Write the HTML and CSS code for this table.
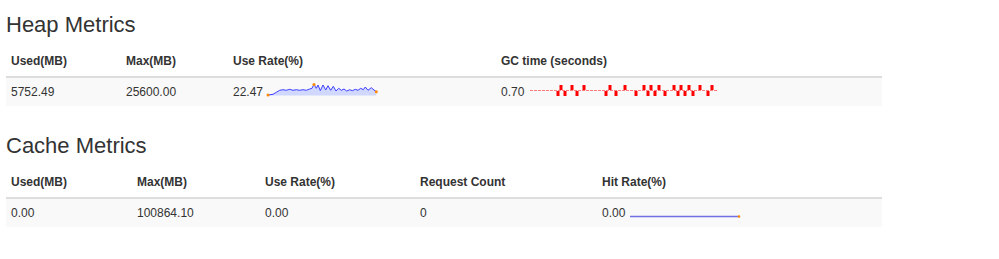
FILE: index.html
```html
<!DOCTYPE html>
<html>
<head>
<meta charset="utf-8">
<link rel="stylesheet" href="styles.css">
</head>
<body>
<div class="page">
  <section class="metrics">
    <h3 class="title">Heap Metrics</h3>
    <table class="table">
      <colgroup>
        <col class="w115"><col class="w107"><col class="w268"><col>
      </colgroup>
      <thead>
        <tr><th>Used(MB)</th><th>Max(MB)</th><th>Use Rate(%)</th><th>GC time (seconds)</th></tr>
      </thead>
      <tbody>
        <tr>
          <td>5752.49</td>
          <td>25600.00</td>
          <td>22.47 <svg class="spark use-rate" width="112" height="14" viewBox="0 0 112 14">
            <polygon class="fill" points="2,12 7,11.3 10.3,9.3 13.7,7.3 17,6.7 20.3,7.3 23.7,6.3 27,7.3 30.3,6.7 33.7,7.3 37,6.7 40.3,7.3 43.7,6 46,5.3 48,1.3 50.3,5.3 52,2 54.3,7.7 57,2 59.7,7 62,2.7 64.7,7.3 67.3,3.3 70,8 72.7,5.3 75.3,7.3 78,6 80.7,8 83.7,6.7 86.3,7.7 89.3,6.3 92,7.3 94.7,5.3 97.3,6.7 99.3,4 102,7.3 105.3,4.7 108,7 110.3,8.7 110.3,12.5 2,12.5"/>
            <polyline class="line" points="2,12 7,11.3 10.3,9.3 13.7,7.3 17,6.7 20.3,7.3 23.7,6.3 27,7.3 30.3,6.7 33.7,7.3 37,6.7 40.3,7.3 43.7,6 46,5.3 48,1.3 50.3,5.3 52,2 54.3,7.7 57,2 59.7,7 62,2.7 64.7,7.3 67.3,3.3 70,8 72.7,5.3 75.3,7.3 78,6 80.7,8 83.7,6.7 86.3,7.7 89.3,6.3 92,7.3 94.7,5.3 97.3,6.7 99.3,4 102,7.3 105.3,4.7 108,7 110.3,8.7"/>
            <circle class="spot" cx="2" cy="12" r="1.5"/>
            <circle class="spot" cx="48" cy="1.5" r="1.5"/>
            <circle class="spot" cx="110.3" cy="8.7" r="1.5"/>
          </svg></td>
          <td>0.70 <svg class="spark gc" width="192" height="14" viewBox="0 0 192 14">
            <line class="zero" x1="2" y1="7.5" x2="190" y2="7.5"/>
            <g class="up">
              <rect x="31.5" y="2" width="3" height="5"/>
              <rect x="42.5" y="2" width="3" height="5"/>
              <rect x="54.5" y="2" width="3" height="5"/>
              <rect x="80.5" y="2" width="3" height="5"/>
              <rect x="95.5" y="2" width="3" height="5"/>
              <rect x="114.5" y="2" width="3" height="5"/>
              <rect x="121.5" y="2" width="3" height="5"/>
              <rect x="129.5" y="2" width="3" height="5"/>
              <rect x="144.5" y="2" width="3" height="5"/>
              <rect x="151.5" y="2" width="3" height="5"/>
              <rect x="159.5" y="2" width="3" height="5"/>
              <rect x="170.5" y="2" width="3" height="5"/>
              <rect x="182.5" y="2" width="3" height="5"/>
            </g>
            <g class="down">
              <rect x="28.5" y="8" width="3" height="5"/>
              <rect x="35.5" y="8" width="3" height="5"/>
              <rect x="47.5" y="8" width="3" height="5"/>
              <rect x="76.5" y="8" width="3" height="5"/>
              <rect x="86.5" y="8" width="3" height="5"/>
              <rect x="106.5" y="8" width="3" height="5"/>
              <rect x="118.5" y="8" width="3" height="5"/>
              <rect x="125.5" y="8" width="3" height="5"/>
              <rect x="135.5" y="8" width="3" height="5"/>
              <rect x="148.5" y="8" width="3" height="5"/>
              <rect x="155.5" y="8" width="3" height="5"/>
              <rect x="163.5" y="8" width="3" height="5"/>
              <rect x="178.5" y="8" width="3" height="5"/>
            </g>
          </svg></td>
        </tr>
      </tbody>
    </table>
  </section>

  <section class="metrics">
    <h3 class="title">Cache Metrics</h3>
    <table class="table">
      <colgroup>
        <col class="w126"><col class="w128"><col class="w155"><col class="w182"><col>
      </colgroup>
      <thead>
        <tr><th>Used(MB)</th><th>Max(MB)</th><th>Use Rate(%)</th><th>Request Count</th><th>Hit Rate(%)</th></tr>
      </thead>
      <tbody>
        <tr>
          <td>0.00</td>
          <td>100864.10</td>
          <td>0.00</td>
          <td>0</td>
          <td>0.00 <svg class="spark hit" width="114" height="14" viewBox="0 0 114 14">
            <line class="flat" x1="1" y1="12.5" x2="110" y2="12.5"/>
            <circle class="spot" cx="110" cy="12.5" r="1.3"/>
          </svg></td>
        </tr>
      </tbody>
    </table>
  </section>
</div>
</body>
</html>
```

FILE: styles.css
```css
html, body {
  margin: 0;
  padding: 0;
  background: #fff;
}

.page {
  padding: 13px 0 0 6px;
  font-family: "Liberation Sans", Arial, sans-serif;
  font-size: 12px;
  color: #333;
}

.title {
  margin: 0 0 10px 0;
  font-size: 22px;
  font-weight: 400;
  line-height: 24px;
  color: #333;
}

.table {
  width: 876px;
  table-layout: fixed;
  border-collapse: collapse;
  border-spacing: 0;
  margin: 0 0 28px 0;
}

.table th,
.table td {
  padding: 5px;
  line-height: 18px;
  text-align: left;
  vertical-align: top;
  white-space: nowrap;
}

.table th {
  padding-bottom: 6px;
  font-weight: bold;
  border-bottom: 2px solid #ddd;
}

.table td {
  border-top: 1px solid #ddd;
}

.table tbody tr:nth-child(odd) {
  background: #f9f9f9;
}

.w115 { width: 115px; }
.w107 { width: 107px; }
.w268 { width: 268px; }
.w126 { width: 126px; }
.w128 { width: 128px; }
.w155 { width: 155px; }
.w182 { width: 182px; }

.spark {
  display: inline-block;
  vertical-align: -1px;
  overflow: visible;
}

.use-rate .fill {
  fill: #d0d8ff;
  stroke: none;
}

.use-rate .line {
  fill: none;
  stroke: #4040ff;
  stroke-width: 1;
  stroke-linejoin: round;
}

.spot {
  fill: #ff8800;
}

.gc .zero {
  stroke: #ff7a7a;
  stroke-width: 1;
  stroke-dasharray: 3 1;
}

.gc .up rect,
.gc .down rect {
  fill: #ff0000;
}

.hit .flat {
  stroke: #6f6fe6;
  stroke-width: 1.5;
}
```
